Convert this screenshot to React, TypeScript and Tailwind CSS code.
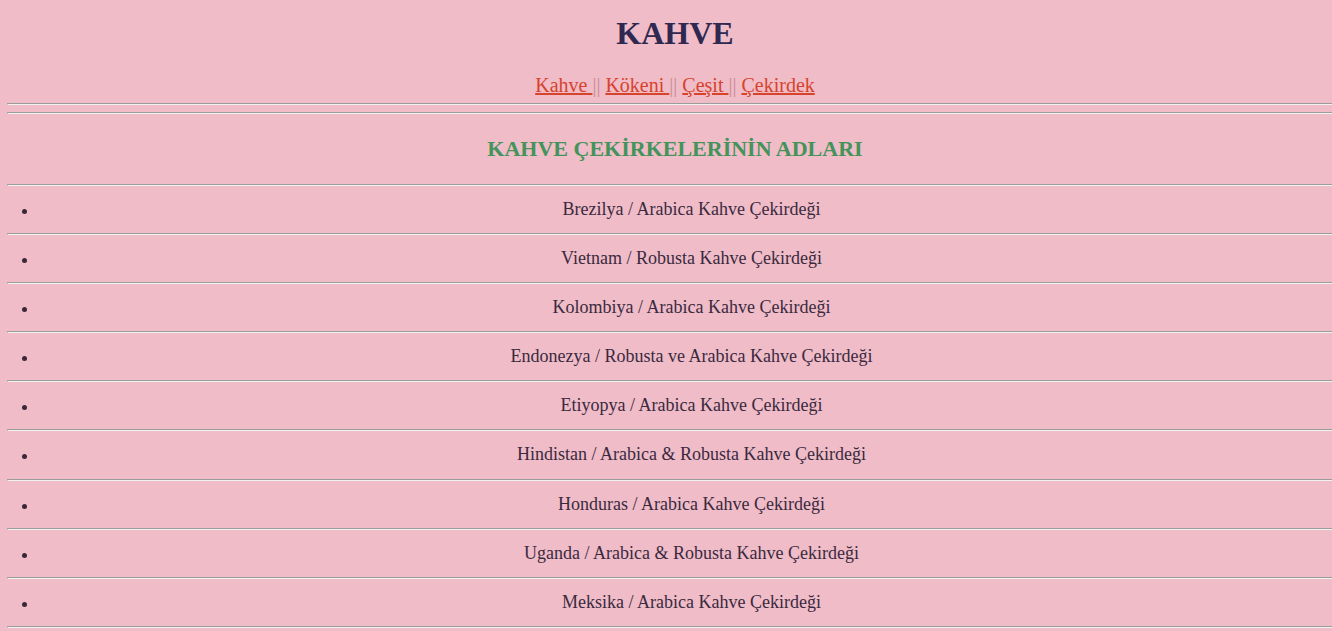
const beans = [
  'Brezilya / Arabica Kahve Çekirdeği',
  'Vietnam / Robusta Kahve Çekirdeği',
  'Kolombiya / Arabica Kahve Çekirdeği',
  'Endonezya / Robusta ve Arabica Kahve Çekirdeği',
  'Etiyopya / Arabica Kahve Çekirdeği',
  'Hindistan / Arabica & Robusta Kahve Çekirdeği',
  'Honduras / Arabica Kahve Çekirdeği',
  'Uganda / Arabica & Robusta Kahve Çekirdeği',
  'Meksika / Arabica Kahve Çekirdeği',
];

const Rule = () => (
  <div className="h-[2px] border-t border-b border-t-[#9c9c9c] border-b-[#f2f2f2] border-l border-l-[#9c9c9c]" />
);

const links = ['Kahve ', 'Kökeni ', 'Çeşit ', 'Çekirdek'];

const App = () => {
  return (
    <div className="w-[1332px] h-[631px] overflow-hidden bg-[#f0bcc8] font-['Liberation_Serif','Times_New_Roman',serif]">
      <div className="ml-[7px] w-[1336px] flex flex-col">
        <h1 className="pt-[15px] text-[32px] leading-[36px] font-bold text-center text-[#2f2850]">KAHVE</h1>

        <nav className="mt-[23px] text-[20px] leading-[23px] text-center text-[#c98a92]">
          {links.map((l, i) => (
            <span key={l}>
              <a href="#" className="underline text-[#d7432b]">{l}</a>
              {i < links.length - 1 && <span>|| </span>}
            </span>
          ))}
        </nav>

        <div className="mt-[6px]">
          <Rule />
        </div>
        <div className="mt-[7px]">
          <Rule />
        </div>

        <h2 className="mt-[22px] text-[22px] leading-[26px] font-bold text-center text-[#43935a]">
          KAHVE ÇEKİRKELERİNİN ADLARI
        </h2>

        <div className="mt-[22px]">
          <Rule />
        </div>

        <ul>
          {beans.map((b) => (
            <li key={b}>
              <div className="flex h-[47.1px]">
                <div className="w-[33px] shrink-0">
                  <div className="ml-[15px] mt-[23px] w-[5px] h-[5px] rounded-full bg-[#3a2838]" />
                </div>
                <div className="flex-1 pt-[13px] text-[18px] leading-[20px] text-center text-[#3a2a3e]">{b}</div>
              </div>
              <Rule />
            </li>
          ))}
        </ul>
      </div>
    </div>
  );
};

export default App;
